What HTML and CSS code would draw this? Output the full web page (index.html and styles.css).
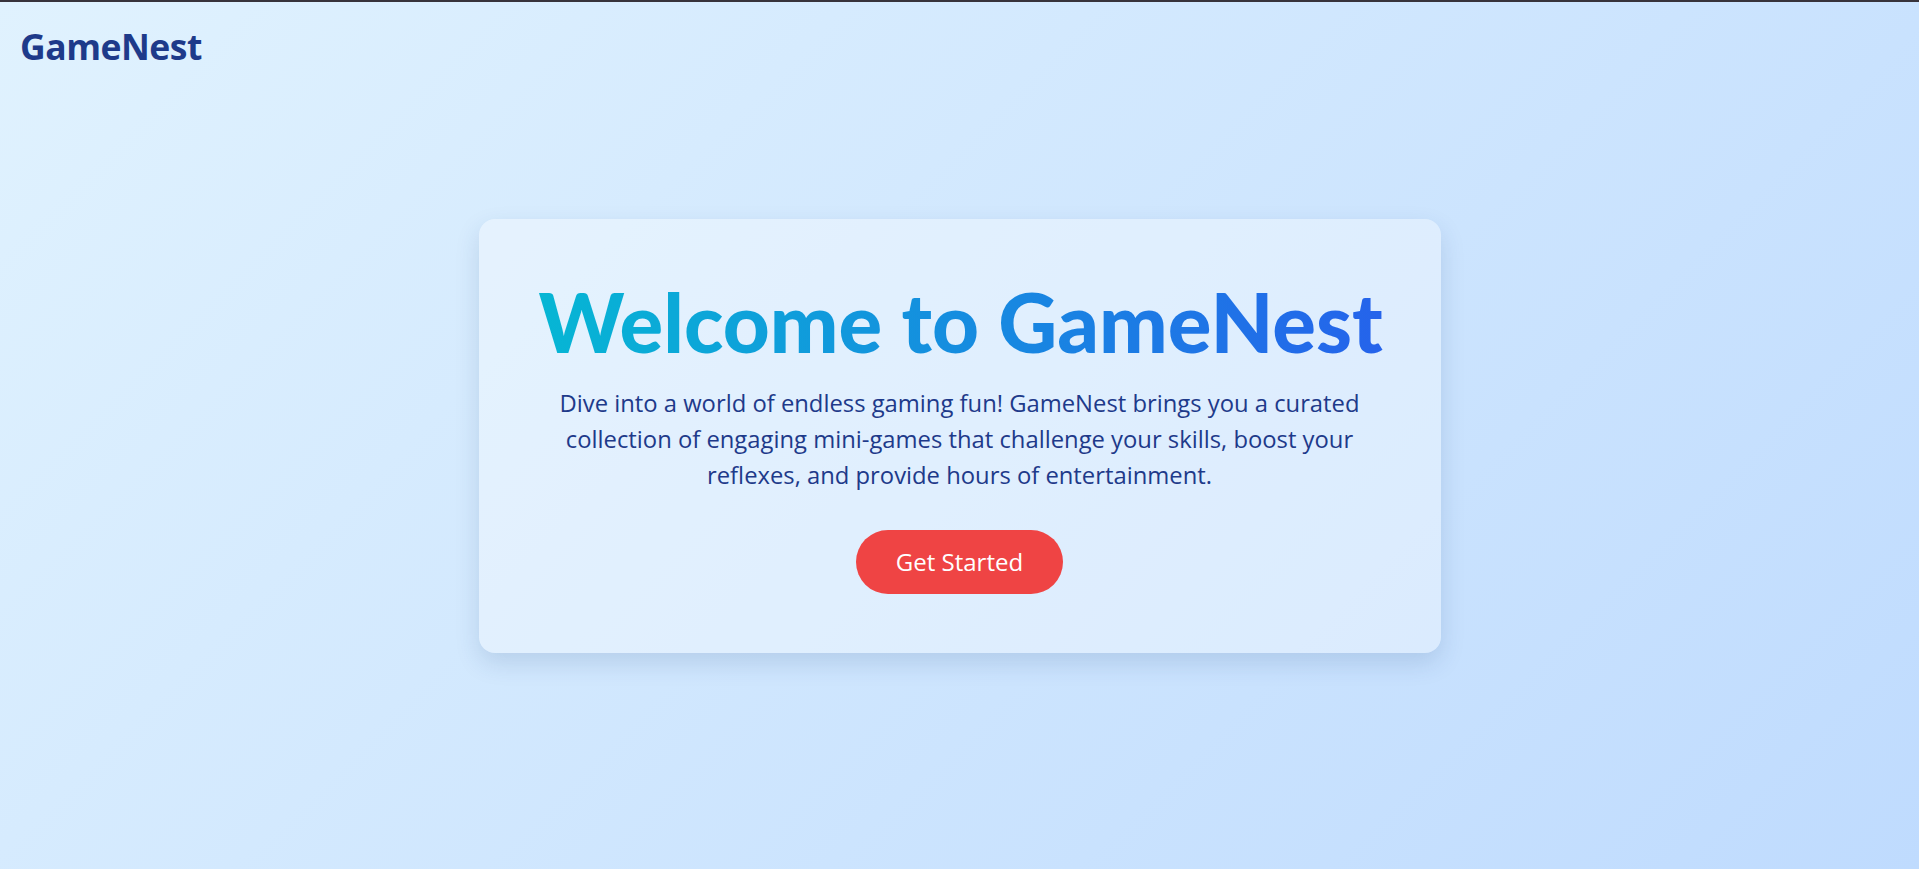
FILE: index.html
```html
<!DOCTYPE html>
<html lang="en">
<head>
<meta charset="utf-8">
<title>GameNest</title>
<link rel="stylesheet" href="styles.css">
</head>
<body>
<div class="page">
  <header class="site-header">
    <div class="logo">GameNest</div>
  </header>
  <main class="hero">
    <section class="card">
      <h1 class="title">Welcome to GameNest</h1>
      <p class="lead">Dive into a world of endless gaming fun! GameNest brings you a curated collection of engaging mini-games that challenge your skills, boost your reflexes, and provide hours of entertainment.</p>
      <button class="cta">Get Started</button>
    </section>
  </main>
</div>
</body>
</html>
```

FILE: styles.css
```css
* { box-sizing: border-box; }
html, body { margin: 0; padding: 0; }
body {
  font-family: "Open Sans", "Noto Sans", sans-serif;
  color: #1e3a8a;
  background: linear-gradient(135deg, #e0f2fe 0%, #bfdbfe 100%);
  min-height: 100vh;
  border-top: 2px solid #37333b;
}
.page {
  display: grid;
  min-height: calc(100vh - 2px);
}
.site-header {
  grid-area: 1 / 1;
  align-self: start;
  padding: 23px 20px;
}
.logo {
  font-size: 35.5px;
  font-weight: 700;
  color: #1e3a8a;
  letter-spacing: -0.5px;
  line-height: 1.2;
}
.hero {
  grid-area: 1 / 1;
  display: flex;
  align-items: center;
  justify-content: center;
}
.card {
  width: 962px;
  background: rgba(255, 255, 255, 0.35);
  border-radius: 16px;
  box-shadow: 0 10px 25px rgba(30, 64, 120, 0.15);
  padding: 55px 60px 59px;
  text-align: center;
}
.title {
  margin: 0 0 15px;
  font-family: "Lato", "Open Sans", sans-serif;
  font-size: 81.5px;
  font-weight: 900;
  line-height: 96px;
  white-space: nowrap;
  background: linear-gradient(90deg, #06b6d4 0%, #2563eb 100%);
  -webkit-background-clip: text;
  background-clip: text;
  color: transparent;
  display: inline-block;
}
.lead {
  margin: 0 auto 37px;
  max-width: 812px;
  font-size: 23.8px;
  line-height: 36px;
  color: #1e3a8a;
}
.cta {
  font-family: inherit;
  font-size: 24px;
  color: #fff;
  background: #ef4444;
  border: none;
  border-radius: 999px;
  padding: 0 40px;
  height: 64px;
  cursor: pointer;
}
```
